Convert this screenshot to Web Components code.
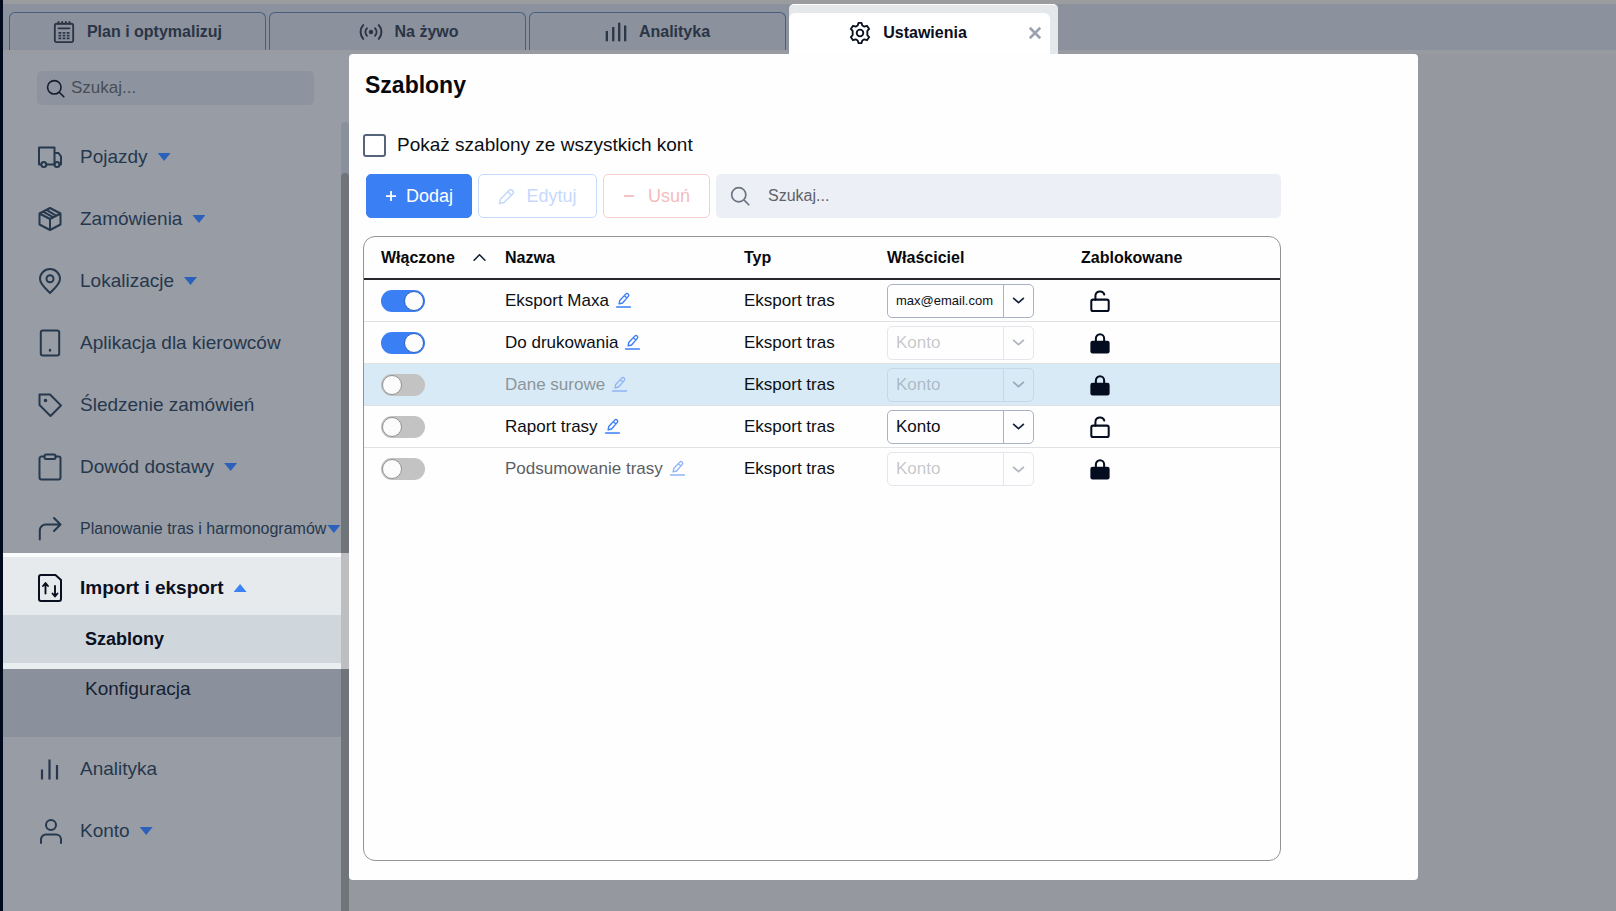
<!DOCTYPE html>
<html lang="pl">
<head>
<meta charset="utf-8">
<title>Szablony</title>
<style>
    html, body {
        height: 100%;
        margin: 0;
    }
    body {
        font-family: "Liberation Sans", Arial, sans-serif;
        font-size: 17px;
        color: #0c0f14;
    }
</style>
</head>
<body>
<app-shell>
    <app-tab slot="tabs" icon="planner">Plan i optymalizuj</app-tab>
    <app-tab slot="tabs" icon="live" style="--tab-inset: 24px">Na żywo</app-tab>
    <app-tab slot="tabs" icon="bars4">Analityka</app-tab>
    <app-tab slot="tabs" icon="gear" active>Ustawienia</app-tab>

    <side-bar slot="sidebar">
        <nav-item icon="truck" expandable>Pojazdy</nav-item>
        <nav-item icon="box" expandable>Zamówienia</nav-item>
        <nav-item icon="pin" expandable>Lokalizacje</nav-item>
        <nav-item icon="tablet">Aplikacja dla kierowców</nav-item>
        <nav-item icon="tag">Śledzenie zamówień</nav-item>
        <nav-item icon="clipboard" expandable>Dowód dostawy</nav-item>
        <nav-item icon="route" expandable dense>Planowanie tras i harmonogramów</nav-item>
        <nav-group slot="group">
            <nav-item icon="transfer" expandable open>Import i eksport</nav-item>
            <nav-subitem slot="current" current>Szablony</nav-subitem>
            <nav-subitem slot="items">Konfiguracja</nav-subitem>
        </nav-group>
        <nav-item slot="bottom" icon="bars3">Analityka</nav-item>
        <nav-item slot="bottom" icon="user" expandable>Konto</nav-item>
    </side-bar>

    <templates-panel>Szablony</templates-panel>
</app-shell>

<script>
const ICONS = {
    planner: '<rect x="2" y="3" width="20" height="20" rx="2" stroke-width="2"/><path d="M6 1v2M10 1v2M14 1v2M18 1v2M6 8h12" stroke-width="2"/><path d="M6 13h3M10.500 13h3M15 13h3M6 16h3M10.500 16h3M15 16h3M6 19h3M10.500 19h3M15 19h3" stroke-width="1.800" stroke-linecap="butt"/>',
    live: '<circle cx="12" cy="12" r="2.400" fill="currentColor" stroke="none"/><path d="M7.500 8c-2 2.200-2 5.800 0 8M3.500 4.500c-3.800 4-3.800 11 0 15M16.500 8c2 2.200 2 5.800 0 8M20.500 4.500c3.800 4 3.800 11 0 15" stroke-width="2.200"/>',
    bars4: '<path d="M2 11v11M9 6.500V22M15.500 2v20M22 5v17" stroke-width="2.500" stroke-linecap="butt"/>',
    gear: '<circle cx="12" cy="12" r="3.600" stroke-width="2"/><path d="M9.500 3.800 10.300 1h3.400l.8 2.800 2.200 1.200 2.900-.9 2.400 3.500-2 2.200v4.400l2 2.200-2.400 3.500-2.900-.9-2.200 1.200-.8 2.800h-3.400l-.8-2.800L7.300 19l-2.900.9L2 16.400l2-2.200V9.800L2 7.600l2.400-3.500 2.900.9z" stroke-width="2"/>',
    close: '<path d="M5 5l14 14M19 5 5 19" stroke-width="3.500" stroke-linecap="butt"/>',
    search: '<circle cx="10.500" cy="10.500" r="8.500"/><path d="M17 17l5.500 5.500"/>',
    truck: '<path d="M3 19.500H1V2.500h15.500v17H8.500M16.500 8h4l2.500 3.500v8h-1.500"/><circle cx="5.800" cy="19.500" r="2.500"/><circle cx="19" cy="19.500" r="2.500"/>',
    box: '<path d="M12 1 22.500 6.500v11L12 23 1.500 17.500v-11zM1.500 6.500 12 12l10.500-5.500M12 12v11M8.500 2.900 18 8.600M5 4.700l10 5.500"/>',
    pin: '<path d="M12 24C8 20 2 15 2 10a10 10 0 0 1 20 0c0 5-6 10-10 14z"/><circle cx="12" cy="9.800" r="3.500"/>',
    tablet: '<rect x="2.800" y="-.5" width="18.400" height="25" rx="2"/><path d="M12 19v.5" stroke-width="2.400"/>',
    tag: '<path d="M1.500 1.500h10.500l11 11L12.500 23 1.500 12z"/><circle cx="7.500" cy="7.500" r=".8" fill="currentColor"/>',
    clipboard: '<path d="M6.500 1.500H3.500a2 2 0 0 0-2 2v19a2 2 0 0 0 2 2h17a2 2 0 0 0 2-2v-19a2 2 0 0 0-2-2h-3"/><rect x="6.500" y="-.5" width="11" height="4.500" rx="1.500"/>',
    route: '<path d="M1.800 22.500v-9a6 6 0 0 1 6-6H22M16 1l6.500 6.500L16 14"/>',
    transfer: '<path d="M3-1h14.500L23 4v19a2 2 0 0 1-2 2H3a2 2 0 0 1-2-2V1a2 2 0 0 1 2-2z" stroke-width="2"/><path d="M7.500 17.500V7.500M5 10l2.500-3L10 10M17 10v10M14.500 17.500l2.500 3 2.500-3" stroke-width="1.900"/>',
    bars3: '<path d="M4 12.500v10M11.500 2.500v20M19 8v14.500" stroke-width="2.200" stroke-linecap="butt"/>',
    user: '<circle cx="13" cy="6" r="5"/><path d="M3 24v-3.500a5 5 0 0 1 5-5h10a5 5 0 0 1 5 5V24"/>',
    pencil: '<path d="M2 22l1.500-6L16 3a2.600 2.600 0 0 1 3.600 0l1.400 1.400a2.600 2.600 0 0 1 0 3.600L8.500 20.500zM14 5.500l4.500 4.500" stroke-width="2.200"/>',
    edit: '<path d="M5 17.500l1-5.500L15.500 1.800a2.700 2.700 0 0 1 4.200 3.600L10.500 16zM13.500 4.500l4 3.500" stroke-width="2.200"/><path d="M1 22.500h22" stroke-width="2.500"/>',
    plus: '<path d="M12 2v20M2 12h20" stroke-width="3.500" stroke-linecap="butt"/>',
    minus: '<path d="M2 12h20" stroke-width="3.500" stroke-linecap="butt"/>',
    down: '<path d="M3 8l9 8 9-8" stroke-width="3.200"/>',
    up: '<path d="M2 17l10-10 10 10" stroke-width="3" stroke-linejoin="miter"/>',
    unlocked: '<rect x="2.500" y="10.500" width="19" height="12.500" rx="2" stroke-width="2.200"/><path d="M7 10.500V6.500a5 5 0 0 1 9.700-1.500" stroke-width="2.200"/>',
    locked: '<rect x="1.500" y="9.500" width="21" height="14" rx="2.500" fill="currentColor" stroke="none"/><path d="M7.500 10V7a4.500 4.500 0 0 1 9 0v3" stroke-width="2.200"/>'
};

class AppIcon extends HTMLElement {
    connectedCallback() {
        const shadow = this.attachShadow({mode: 'open'});
        shadow.innerHTML = `
        <style>
            :host {
                display: inline-block;
                width: 24px;
                height: 24px;
                flex: none;
            }
            svg {
                display: block;
                width: 100%;
                height: 100%;
                overflow: visible;
                fill: none;
                stroke: currentColor;
                stroke-width: 2;
                stroke-linecap: round;
                stroke-linejoin: round;
            }
        </style>
        <svg viewBox="0 0 24 24" aria-hidden="true">${ICONS[this.getAttribute('name')]}</svg>
        `;
    }
}

class AppShell extends HTMLElement {
    constructor() {
        super();
        this.attachShadow({mode: 'open'}).innerHTML = `
        <style>
            :host {
                display: flex;
                flex-direction: column;
                box-sizing: border-box;
                min-height: 100%;
                border-left: 3px solid #020b1e;
                background: #95999f;
            }
            header {
                display: flex;
                align-items: flex-end;
                gap: 3px;
                height: 54px;
                padding-left: 6px;
                background: linear-gradient(#9a9c9e 4px, #8b919d 4px 50px, #989ca2 50px);
            }
            .body {
                flex: 1;
                display: flex;
            }
            main {
                flex: 1;
                min-width: 0;
                display: flex;
                padding: 0 198px 31px 0;
            }
        </style>
        <header><slot name="tabs"></slot></header>
        <div class="body">
            <slot name="sidebar"></slot>
            <main><slot></slot></main>
        </div>
        `;
    }
}

class AppTab extends HTMLElement {
    connectedCallback() {
        const active = this.hasAttribute('active');
        this.attachShadow({mode: 'open'}).innerHTML = `
        <style>
            :host {
                flex: 0 1 257px;
                display: flex;
                box-sizing: border-box;
                height: 42px;
                padding-bottom: 4px;
                color: #2a3545;
            }
            :host([active]) {
                flex-basis: 269px;
                height: 50px;
                padding: 8px 8px 0 0;
                border-top: 1px solid #fff;
                border-radius: 5px 5px 0 0;
                background: #e4e8eb;
                color: #0b1020;
            }
            .tab {
                flex: 1;
                display: flex;
                align-items: center;
                border: 1px solid #47607f;
                border-bottom: 0;
                border-radius: 6px 6px 0 0;
            }
            :host([active]) .tab {
                border-color: #fff;
                background: #fff;
                padding: 0 5px 3px 0;
            }
            button {
                display: flex;
                align-items: center;
                border: 0;
                padding: 0;
                background: none;
                color: inherit;
                font: bold 16px/20px "Liberation Sans", Arial, sans-serif;
            }
            .name {
                flex: 1;
                justify-content: center;
                gap: 12px;
                height: 100%;
                padding-left: var(--tab-inset, 0px);
            }
            .name app-icon {
                width: 22px;
                height: 22px;
            }
            .close {
                color: #9aa3af;
            }
            .close app-icon {
                width: 18px;
                height: 18px;
            }
        </style>
        <div class="tab">
            <button class="name" type="button"><app-icon name="${this.getAttribute('icon')}"></app-icon><span><slot></slot></span></button>
            ${active ? '<button class="close" type="button" aria-label="Zamknij"><app-icon name="close"></app-icon></button>' : ''}
        </div>
        `;
    }
}

class SideBar extends HTMLElement {
    constructor() {
        super();
        this.attachShadow({mode: 'open'}).innerHTML = `
        <style>
            :host {
                position: relative;
                display: block;
                width: 346px;
                background: #989ca5;
            }
            .search {
                display: flex;
                align-items: center;
                gap: 6px;
                margin: 17px 35px 28px 34px;
                padding: 0 9px;
                height: 34px;
                border-radius: 5px;
                background: #8d949f;
                color: #151d2c;
            }
            .search app-icon {
                width: 19px;
                height: 19px;
            }
            input {
                flex: 1;
                min-width: 0;
                border: 0;
                padding: 0;
                outline: 0;
                background: none;
                color: inherit;
                font: 17px/20px "Liberation Sans", Arial, sans-serif;
            }
            input::placeholder {
                color: #484d55;
                opacity: 1;
            }
            .list {
                display: flex;
                flex-direction: column;
                gap: 14px;
            }
            .bottom {
                padding-top: 8px;
            }
            /* scrollbar drawn over the list */
            .track, .thumb {
                position: absolute;
                right: 0;
                bottom: 0;
                width: 8px;
                border-radius: 4px 4px 0 0;
            }
            .track {
                top: 68px;
                background: rgba(110, 115, 140, .3);
            }
            .thumb {
                top: 119px;
                background: #70757a;
            }
        </style>
        <label class="search"><app-icon name="search"></app-icon><input type="text" placeholder="Szukaj..." aria-label="Szukaj w ustawieniach"></label>
        <nav>
            <div class="list"><slot></slot></div>
            <slot name="group"></slot>
            <div class="list bottom"><slot name="bottom"></slot></div>
        </nav>
        <div class="track"></div>
        <div class="thumb"></div>
        `;
    }
}

class NavItem extends HTMLElement {
    connectedCallback() {
        const expandable = this.hasAttribute('expandable');
        const inner = `<app-icon name="${this.getAttribute('icon')}"></app-icon><span><slot></slot></span>`;
        this.attachShadow({mode: 'open'}).innerHTML = `
        <style>
            :host {
                display: block;
                color: #26384d;
                --caret: #2b61ba;
            }
            :host([open]) {
                color: #0b1020;
                --caret: #3b82f6;
            }
            button, a {
                display: flex;
                align-items: center;
                width: 100%;
                height: 48px;
                box-sizing: border-box;
                padding: 0 0 0 35px;
                border: 0;
                background: none;
                color: inherit;
                font: 19px/24px "Liberation Sans", Arial, sans-serif;
                text-align: left;
                text-decoration: none;
                white-space: nowrap;
            }
            :host([dense]) button {
                font-size: 16px;
            }
            :host([open]) button {
                font-weight: bold;
            }
            span {
                margin: 0 10px 0 18px;
            }
            :host([dense]) span {
                margin-right: 1px;
            }
            .caret {
                width: 13px;
                height: 8px;
                background: var(--caret);
                clip-path: polygon(0 0, 100% 0, 50% 100%);
            }
            :host([open]) .caret {
                clip-path: polygon(50% 0, 100% 100%, 0 100%);
            }
        </style>
        ${expandable
            ? `<button type="button" aria-expanded="${this.hasAttribute('open')}">${inner}<i class="caret"></i></button>`
            : `<a href="#">${inner}</a>`}
        `;
    }
}

class NavGroup extends HTMLElement {
    constructor() {
        super();
        this.attachShadow({mode: 'open'}).innerHTML = `
        <style>
            :host {
                display: block;
                background: #8b919c;
                padding-bottom: 27px;
            }
            .lit {
                position: relative;
                z-index: 1;
                border-top: 4px solid #fafbfd;
                border-bottom: 6px solid #e9eef1;
                background: #e6eaed;
            }
            /* lit part of the scrollbar */
            .lit::after {
                content: "";
                position: absolute;
                top: -4px;
                bottom: -6px;
                right: 0;
                width: 8px;
                background: #bcbec0;
            }
            .head {
                padding: 7px 0 3px;
            }
        </style>
        <div class="lit">
            <div class="head"><slot></slot></div>
            <slot name="current"></slot>
        </div>
        <slot name="items"></slot>
        `;
    }
}

class NavSubitem extends HTMLElement {
    constructor() {
        super();
        this.attachShadow({mode: 'open'}).innerHTML = `
        <style>
            :host {
                display: block;
            }
            a {
                display: block;
                padding: 8px 0 9px 82px;
                color: #161f33;
                font-size: 19px;
                line-height: 24px;
                text-decoration: none;
            }
            :host([current]) a {
                padding: 12px 0 12px 82px;
                background: #cfd7dc;
                color: #0b1020;
                font-size: 18px;
                font-weight: bold;
            }
        </style>
        <a href="#"><slot></slot></a>
        `;
    }
}

class ToggleSwitch extends HTMLElement {
    connectedCallback() {
        this.attachShadow({mode: 'open'}).innerHTML = `
        <style>
            :host {
                display: block;
            }
            input {
                appearance: none;
                display: flex;
                align-items: center;
                box-sizing: border-box;
                width: 44px;
                height: 22px;
                margin: 0;
                padding: 1px;
                border-radius: 11px;
                background: #c3c3c3;
            }
            input::before {
                content: "";
                box-sizing: border-box;
                width: 20px;
                height: 20px;
                border: 1px solid #929292;
                border-radius: 50%;
                background: #fcfcfc;
            }
            input:checked {
                justify-content: flex-end;
                background: #3b7ff5;
            }
            input:checked::before {
                border-color: #2d62bd;
            }
        </style>
        <input type="checkbox" role="switch" aria-label="${this.getAttribute('label')}" ${this.hasAttribute('on') ? 'checked' : ''}>
        `;
    }
}

class OwnerSelect extends HTMLElement {
    connectedCallback() {
        const value = this.getAttribute('value');
        this.attachShadow({mode: 'open'}).innerHTML = `
        <style>
            :host {
                display: grid;
                grid-template-columns: 1fr 30px;
                box-sizing: border-box;
                width: 147px;
                height: 34px;
                border: 1px solid #a9b1c5;
                border-radius: 5px;
                color: #0c0f14;
                --line: #a9b1c5;
            }
            :host([locked]) {
                border-color: rgba(150, 160, 190, .25);
                --line: rgba(150, 160, 190, .25);
            }
            select {
                grid-area: 1 / 1 / 2 / 3;
                appearance: none;
                min-width: 0;
                border: 0;
                padding: 0 32px 0 8px;
                background: none;
                color: inherit;
                opacity: 1;
                font: 17px/20px "Liberation Sans", Arial, sans-serif;
            }
            :host([email]) select {
                font-size: 13px;
            }
            :host([locked]) select {
                color: rgba(60, 65, 75, .3);
            }
            .arrow {
                grid-area: 1 / 2;
                display: flex;
                align-items: center;
                justify-content: center;
                border-left: 1px solid var(--line);
                color: #17233d;
                pointer-events: none;
            }
            :host([locked]) .arrow {
                color: rgba(60, 70, 95, .4);
            }
            app-icon {
                width: 13px;
                height: 13px;
            }
        </style>
        <select aria-label="Właściciel" ${this.hasAttribute('locked') ? 'disabled' : ''}><option>${value}</option></select>
        <span class="arrow"><app-icon name="down"></app-icon></span>
        `;
    }
}

const TEMPLATES = [
    {name: 'Eksport Maxa', on: true, owner: 'max@email.com', locked: false},
    {name: 'Do drukowania', on: true, owner: 'Konto', locked: true},
    {name: 'Dane surowe', on: false, owner: 'Konto', locked: true, cls: 'selected pale'},
    {name: 'Raport trasy', on: false, owner: 'Konto', locked: false},
    {name: 'Podsumowanie trasy', on: false, owner: 'Konto', locked: true, cls: 'muted'}
];

class TemplatesTable extends HTMLElement {
    row(t) {
        return `
        <tr class="${t.cls || ''}">
            <td><toggle-switch label="${t.name}" ${t.on ? 'on' : ''}></toggle-switch></td>
            <td class="name"><span>${t.name}</span><button type="button" aria-label="Zmień nazwę"><app-icon name="edit"></app-icon></button></td>
            <td>Eksport tras</td>
            <td><owner-select value="${t.owner}" ${t.owner.includes('@') ? 'email' : ''} ${t.locked ? 'locked' : ''}></owner-select></td>
            <td class="lock"><app-icon name="${t.locked ? 'locked' : 'unlocked'}"></app-icon></td>
        </tr>`;
    }

    connectedCallback() {
        this.attachShadow({mode: 'open'}).innerHTML = `
        <style>
            :host {
                display: block;
                border: 1px solid #929496;
                border-radius: 12px;
                overflow: hidden;
            }
            table {
                width: 100%;
                table-layout: fixed;
                border-collapse: separate;
                border-spacing: 0;
            }
            th, td {
                box-sizing: border-box;
                padding: 0;
                text-align: left;
                line-height: 20px;
            }
            th:first-child, td:first-child {
                padding-left: 17px;
            }
            th {
                height: 43px;
                border-bottom: 2px solid #25272a;
                font-size: 16px;
                color: #08090c;
            }
            td {
                height: 42px;
                border-bottom: 1px solid #e0e1e3;
                vertical-align: middle;
            }
            tr:last-child td {
                border-bottom: 0;
            }
            .c1 { width: 141px; }
            .c2 { width: 239px; }
            .c3 { width: 143px; }
            .c4 { width: 194px; }
            .sort {
                width: 13px;
                height: 13px;
                margin-left: 18px;
                vertical-align: -1px;
                color: #17233d;
            }
            .name button {
                border: 0;
                padding: 0;
                margin-left: 7px;
                background: none;
                color: #3b7ff5;
                vertical-align: -2px;
            }
            .name app-icon {
                display: block;
                width: 15px;
                height: 15px;
            }
            .selected td {
                background: #d8eaf5;
            }
            .pale .name span {
                color: #8b959c;
            }
            .muted .name span {
                color: #5d5f63;
            }
            .pale .name button, .muted .name button {
                color: #8fb4f5;
            }
            .lock {
                padding-left: 8px;
                color: #040d1f;
            }
            .lock app-icon {
                display: block;
                width: 22px;
                height: 22px;
            }
        </style>
        <table>
            <colgroup><col class="c1"><col class="c2"><col class="c3"><col class="c4"><col></colgroup>
            <thead>
                <tr>
                    <th>Włączone<app-icon class="sort" name="up"></app-icon></th>
                    <th>Nazwa</th>
                    <th>Typ</th>
                    <th>Właściciel</th>
                    <th>Zablokowane</th>
                </tr>
            </thead>
            <tbody>${TEMPLATES.map(t => this.row(t)).join('')}</tbody>
        </table>
        `;
    }
}

class TemplatesPanel extends HTMLElement {
    constructor() {
        super();
        this.attachShadow({mode: 'open'}).innerHTML = `
        <style>
            :host {
                flex: 1;
                min-width: 0;
                display: flex;
                flex-direction: column;
                box-sizing: border-box;
                padding: 16px 137px 19px 14px;
                border-radius: 4px;
                background: #fefefe;
            }
            h1 {
                margin: 0 2px;
                font-size: 23px;
                line-height: 30px;
                color: #08090c;
            }
            .all {
                display: flex;
                align-items: center;
                gap: 11px;
                margin: 33px 0 17px;
                font-size: 19px;
                line-height: 24px;
            }
            .all input {
                appearance: none;
                box-sizing: border-box;
                width: 23px;
                height: 23px;
                margin: 0;
                border: 2px solid #56647a;
                border-radius: 3px;
                background: #fff;
            }
            .tools {
                display: flex;
                gap: 6px;
                height: 44px;
                margin: 0 0 18px 3px;
            }
            button {
                display: flex;
                align-items: center;
                justify-content: center;
                box-sizing: border-box;
                padding: 0 16px;
                border: 1px solid;
                border-radius: 5px;
                background: #fff;
                font: 18px/20px "Liberation Sans", Arial, sans-serif;
            }
            button app-icon {
                width: 12px;
                height: 12px;
            }
            .add {
                width: 106px;
                gap: 9px;
                border-color: #3b7ff5;
                background: #3b7ff5;
                color: #fff;
            }
            .edit {
                width: 119px;
                gap: 11px;
                border-color: #c9dbfc;
                color: #c6d9fb;
            }
            .edit app-icon {
                width: 17px;
                height: 17px;
            }
            .remove {
                width: 107px;
                gap: 13px;
                border-color: #f8cfcf;
                color: #f3bcbc;
            }
            .search {
                flex: 1;
                display: flex;
                align-items: center;
                gap: 18px;
                padding: 0 14px;
                border-radius: 5px;
                background: #eceff5;
                color: #6c7280;
            }
            .search app-icon {
                width: 20px;
                height: 20px;
            }
            .search input {
                flex: 1;
                min-width: 0;
                border: 0;
                padding: 0;
                outline: 0;
                background: none;
                font: 16px/20px "Liberation Sans", Arial, sans-serif;
            }
            .search input::placeholder {
                color: #606268;
                opacity: 1;
            }
            templates-table {
                flex: 1;
            }
        </style>
        <h1><slot></slot></h1>
        <label class="all"><input type="checkbox">Pokaż szablony ze wszystkich kont</label>
        <div class="tools">
            <button class="add" type="button"><app-icon name="plus"></app-icon>Dodaj</button>
            <button class="edit" type="button" disabled><app-icon name="pencil"></app-icon>Edytuj</button>
            <button class="remove" type="button" disabled><app-icon name="minus"></app-icon>Usuń</button>
            <label class="search"><app-icon name="search"></app-icon><input type="text" placeholder="Szukaj..." aria-label="Szukaj szablonu"></label>
        </div>
        <templates-table></templates-table>
        `;
    }
}

customElements.define('app-icon', AppIcon);
customElements.define('app-shell', AppShell);
customElements.define('app-tab', AppTab);
customElements.define('side-bar', SideBar);
customElements.define('nav-item', NavItem);
customElements.define('nav-group', NavGroup);
customElements.define('nav-subitem', NavSubitem);
customElements.define('toggle-switch', ToggleSwitch);
customElements.define('owner-select', OwnerSelect);
customElements.define('templates-table', TemplatesTable);
customElements.define('templates-panel', TemplatesPanel);
</script>
</body>
</html>
